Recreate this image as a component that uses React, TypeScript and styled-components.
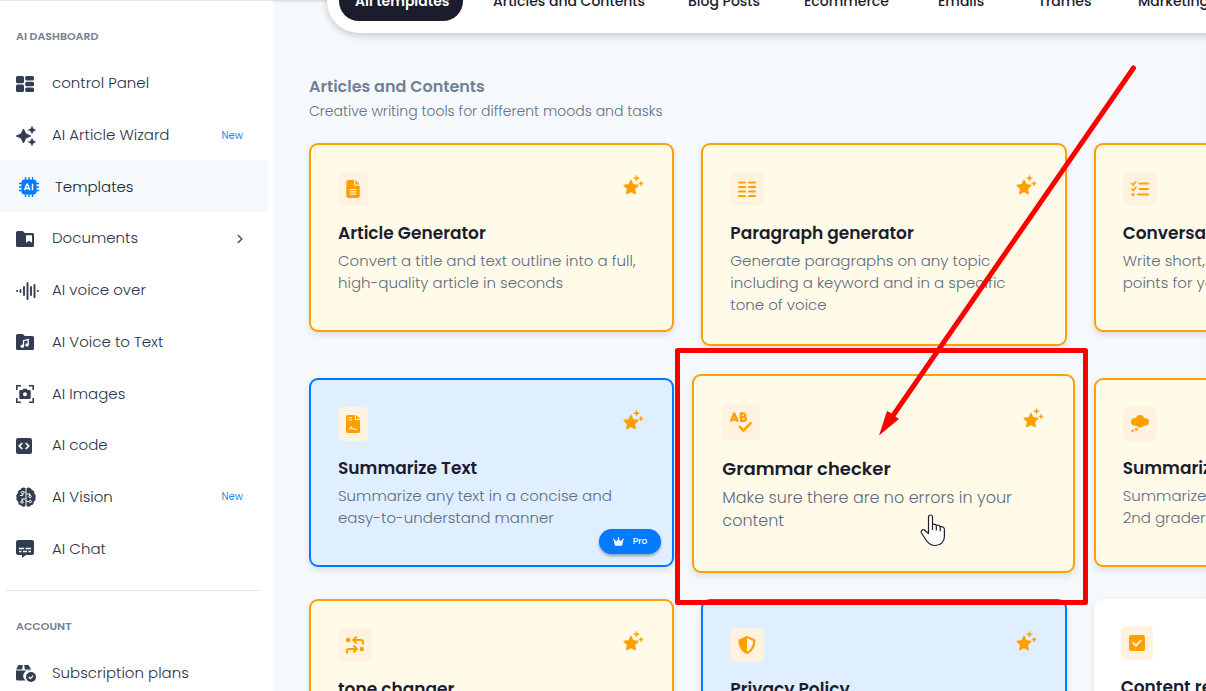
import React from "react";
import styled, { createGlobalStyle, css } from "styled-components";
import { FaShieldHalved, FaCrown, FaFileLines, FaSpellCheck } from "react-icons/fa6";

const ORANGE = "#ff9f00";
const BLUE = "#007aff";

const GlobalStyle = createGlobalStyle`
  * { box-sizing: border-box; }
  body {
    margin: 0;
    background: #f5f9fc;
    font-family: Poppins, Inter, "Open Sans", sans-serif;
    color: #1b1c2d;
  }
  h2, h3, p, ul { margin: 0; padding: 0; }
  ul { list-style: none; }
  button { font-family: inherit; border: 0; background: none; padding: 0; cursor: pointer; }
  a { color: inherit; text-decoration: none; }
  svg { display: block; flex: none; }
`;

const Page = styled.div`
  position: relative;
  display: flex;
  height: 100vh;
  overflow: hidden;
`;

const Sidebar = styled.nav`
  flex: none;
  width: 273px;
  background: #fff;
  border-top: 1px solid #e3e8ee;
  overflow: hidden;
`;

const GroupLabel = styled.h2`
  padding: 27px 16px 13px;
  font-size: 11px;
  line-height: 16px;
  font-weight: 600;
  color: #748094;
`;

const NavList = styled.ul<{ $height: number }>`
  display: grid;
  grid-auto-rows: 1fr;
  height: ${(p) => p.$height}px;
  margin-right: 5px;
`;

const NavLink = styled.a<{ $active?: boolean }>`
  display: flex;
  align-items: center;
  height: 100%;
  padding: 0 25px 0 16px;
  font-size: 15px;
  font-weight: 300;
  color: #2a3348;
  ${(p) =>
    p.$active &&
    css`
      padding-left: 19px;
      background: #f5f9fc;
      color: #1b1c2d;
    `}
`;

const NavIcon = styled.span`
  width: 36px;
  padding-top: 2px;
  color: #333d52;
`;

const NewTag = styled.span`
  margin-left: auto;
  padding-top: 2px;
  font-size: 10px;
  font-weight: 400;
  color: #2f8af0;
`;

const NavChevron = styled.span`
  margin-left: auto;
  padding-top: 2px;
`;

const Divider = styled.hr`
  height: 1px;
  margin: 16px 14px 0 6px;
  border: 0;
  background: #e3e8ee;
`;

const Main = styled.main`
  flex: 1;
  min-width: 0;
  padding: 0 36px;
  overflow: hidden;
  box-shadow: inset 0 3px 3px -2px #c9ced3;
`;

const TabsRow = styled.div`
  display: flex;
  align-items: flex-end;
  height: 33px;
  padding-left: 18px;
`;

const Tabs = styled.div`
  display: flex;
  flex: none;
  min-width: 100%;
  padding: 12px;
  border-radius: 32px;
  background: #fff;
  box-shadow: 0 3px 7px rgba(40, 50, 60, 0.22);
`;

const Tab = styled.button<{ $active?: boolean; $width: number }>`
  height: 40px;
  width: ${(p) => p.$width}px;
  padding: 0 16px;
  border-radius: 20px;
  text-align: left;
  white-space: nowrap;
  font-size: 14px;
  font-weight: 500;
  color: #1b1c2d;
  ${(p) =>
    p.$active &&
    css`
      margin-right: 14px;
      background: #1b1c2d;
      color: #fff;
      font-weight: 600;
    `}
`;

const SectionHead = styled.header`
  padding: 42px 0 19px;
  color: #718096;
`;

const SectionTitle = styled.h2`
  font-size: 16px;
  line-height: 24px;
  font-weight: 600;
`;

const SectionText = styled.p`
  font-size: 14px;
  line-height: 25px;
  font-weight: 300;
  color: #637087;
`;

const Grid = styled.div`
  display: grid;
  grid-template-columns: repeat(3, 1fr);
  gap: 32px 27px;
  align-items: start;
  min-width: 1150px;
`;

type Tone = "gold" | "pro" | "plain";

const tones = {
  gold: css`
    border: 2px solid ${ORANGE};
    background: #fffbe8;
  `,
  pro: css`
    border: 2px solid ${BLUE};
    background: #e0efff;
  `,
  plain: css`
    background: #fff;
  `,
};

const IconBox = styled.span`
  display: block;
  padding: 8px;
  border-radius: 5px;
  background: #fff3e0;
`;

const CardTitle = styled.h3`
  margin-top: 15px;
  font-size: 17px;
  line-height: 24px;
  font-weight: 600;
`;

const CardText = styled.p`
  margin-top: 5px;
  font-size: 15px;
  line-height: 22px;
  font-weight: 300;
  color: #5f6b82;
`;

const StarButton = styled.button`
  padding-top: 3px;
`;

const Card = styled.article<{ $tone: Tone; $raised?: boolean }>`
  position: relative;
  min-height: 189px;
  padding: 27px 27px 28px;
  border-radius: 9px;
  box-shadow: 0 3px 6px rgba(40, 50, 60, 0.13);
  ${(p) => tones[p.$tone]}
  ${(p) =>
    p.$raised &&
    css`
      min-height: 199px;
      margin: -4px -8px -6px -9px;
      padding: 28px;
      ${StarButton} {
        padding-top: 4px;
      }
      ${CardTitle} {
        font-size: 18px;
        margin-top: 17px;
      }
      ${CardText} {
        font-size: 16px;
        line-height: 23px;
      }
    `}
`;

const CardTop = styled.div`
  display: flex;
  justify-content: space-between;
  align-items: flex-start;
`;

const ProBadge = styled.span`
  position: absolute;
  right: 11px;
  bottom: 11px;
  display: flex;
  align-items: center;
  gap: 9px;
  height: 25px;
  padding: 0 14px;
  border-radius: 13px;
  background: ${BLUE};
  box-shadow: 0 2px 3px rgba(20, 40, 80, 0.4);
  color: #fff;
  font-size: 9px;
  font-weight: 500;
`;

const FileIcon = styled(FaFileLines)`
  width: 14px;
  height: 18px;
  color: ${ORANGE};
`;

const SpellIcon = styled(FaSpellCheck)`
  width: 22px;
  height: 20px;
  color: ${ORANGE};
`;

const Overlay = styled.svg`
  position: absolute;
  left: 675px;
  top: 60px;
  pointer-events: none;
`;

const StarIcon = () => (
  <svg width="22" height="20" viewBox="0 0 22 20" fill={ORANGE}>
    <path
      d="M8 5.300l2.100 4.400 4.900.7-3.500 3.400.8 4.900L8 16.400l-4.300 2.300.8-4.900L1 10.400l4.900-.7z"
      stroke={ORANGE}
      strokeWidth="1.200"
      strokeLinejoin="round"
    />
    <path
      d="M13.500 .3l.7 2.200 2.200.7-2.200.7-.7 2.200-.7-2.200-2.200-.7 2.200-.7zM18 6.300l.6 1.700 1.700.6-1.700.6-.6 1.700-.6-1.700-1.700-.6 1.700-.6z"
      stroke={ORANGE}
      strokeWidth=".6"
      strokeLinejoin="round"
    />
  </svg>
);

const svgProps = { fill: "currentColor" };

const icons = {
  panel: (
    <svg width="18" height="16" viewBox="0 0 18 16" {...svgProps}>
      <rect width="8" height="7.200" rx="1.500" />
      <rect y="8.500" width="8" height="7.500" rx="1.500" />
      <rect x="9.200" width="8.800" height="4.600" rx="1.500" />
      <rect x="9.200" y="5.700" width="8.800" height="4.600" rx="1.500" />
      <rect x="9.200" y="11.400" width="8.800" height="4.600" rx="1.500" />
    </svg>
  ),
  wizard: (
    <svg width="20" height="20" viewBox="0 0 20 20" {...svgProps}>
      <path d="M7.500 3l2.300 4.900L14.700 10l-4.900 2.100-2.300 4.900-2.300-4.900L.3 10l4.900-2.100z" stroke="currentColor" strokeWidth="1" strokeLinejoin="round" />
      <path d="M16 .3l1.200 2.500 2.500 1.200-2.500 1.200L16 7.700l-1.200-2.500L12.300 4l2.500-1.200zM16 12.300l1.200 2.500 2.500 1.200-2.500 1.200-1.200 2.500-1.200-2.500-2.500-1.200 2.500-1.200z" stroke="currentColor" strokeWidth=".5" strokeLinejoin="round" />
    </svg>
  ),
  chip: (
    <svg width="20" height="20" viewBox="0 0 20 20" fill={BLUE}>
      <path d="M6.500 0v20M10 0v20M13.500 0v20M0 6.500h20M0 10h20M0 13.500h20" stroke={BLUE} strokeWidth="1.300" />
      <rect x="2.500" y="2.500" width="15" height="15" rx="3" />
      <path d="M5.500 13.200l2.300-6h.8l2.300 6M6.300 11.500h3.800M13.500 6.800v6.500" fill="none" stroke="#fff" strokeWidth="1.500" />
    </svg>
  ),
  documents: (
    <svg width="18" height="16" viewBox="0 0 18 16" {...svgProps}>
      <path fillRule="evenodd" d="M1.500 0h5.300l2 2h7.700A1.500 1.500 0 0 1 18 3.500v11a1.500 1.500 0 0 1-1.500 1.500h-15A1.500 1.500 0 0 1 0 14.500v-13A1.500 1.500 0 0 1 1.500 0zM10 4.300v7.500l3-2 3 2V4.300z" />
    </svg>
  ),
  wave: (
    <svg width="23" height="18" viewBox="0 0 23 18" fill="none" stroke="currentColor" strokeWidth="1.900" strokeLinecap="round">
      <path d="M1 9h.2M4.500 8v2M8 5v8M11.500 1v16M15 5v8M18.500 3v12M22 9h-.2" />
    </svg>
  ),
  music: (
    <svg width="18" height="16" viewBox="0 0 18 16" {...svgProps}>
      <path d="M1.500 0h5.300l2 2h7.700A1.500 1.500 0 0 1 18 3.500v11a1.500 1.500 0 0 1-1.500 1.500h-15A1.500 1.500 0 0 1 0 14.500v-13A1.500 1.500 0 0 1 1.500 0z" />
      <path d="M7.500 12V6.700l4.700-1.200v5.300" fill="none" stroke="#fff" strokeWidth="1.300" />
      <circle cx="6.300" cy="12.200" r="1.700" fill="#fff" />
      <circle cx="11" cy="11" r="1.700" fill="#fff" />
    </svg>
  ),
  images: (
    <svg width="18" height="18" viewBox="0 0 18 18" {...svgProps}>
      <path d="M.8 5V.8H5M13 .8h4.200V5M17.200 13v4.200H13M5 17.200H.8V13" fill="none" stroke="currentColor" strokeWidth="1.600" />
      <path fillRule="evenodd" d="M4.500 5h2l.9-1.300h3.200l.9 1.300h2A1.200 1.200 0 0 1 14.700 6.200v6.600a1.200 1.200 0 0 1-1.200 1.200h-9a1.200 1.200 0 0 1-1.200-1.200V6.200A1.200 1.200 0 0 1 4.500 5zM9 7.200a2 2 0 1 0 0 4 2 2 0 0 0 0-4z" />
    </svg>
  ),
  code: (
    <svg width="16" height="16" viewBox="0 0 16 16" {...svgProps}>
      <rect width="16" height="16" rx="2" />
      <path d="M6.300 5L3.300 8l3 3M9.700 5l3 3-3 3" fill="none" stroke="#fff" strokeWidth="1.700" />
    </svg>
  ),
  brain: (
    <svg width="20" height="20" viewBox="0 0 20 20" {...svgProps}>
      <path d="M9.500 1.200v17.600C8.500 20 6 20.200 5.200 18.300 3 18.300 2 16.500 2.400 14.800.6 14 0 12.300.7 10.800-.2 9.200.2 7.500 1.700 6.700 1.300 4.700 2.500 3.200 4.200 3 4.800.5 8 -.4 9.500 1.200z" />
      <path d="M10.500 1.200v17.600c1 1.200 3.500 1.400 4.300-.5 2.200 0 3.200-1.800 2.800-3.500 1.800-.8 2.400-2.500 1.700-4 .9-1.600.5-3.300-1-4.100.4-2-.8-3.500-2.500-3.700C15.200.5 12-.4 10.500 1.200z" />
      <path d="M9.500 5.200H7.700M9.500 12H6.300v2M4 8.500h1.500a1.500 1.500 0 0 0 1.500-1.500M10.500 7h3.200v1.500M10.500 14.500h2.500" fill="none" stroke="#fff" strokeWidth="1.100" />
      <g fill="#333d52" stroke="#fff" strokeWidth="1">
        <circle cx="6.500" cy="5.500" r="1.200" />
        <circle cx="6" cy="15" r="1.200" />
        <circle cx="14" cy="9.500" r="1.200" />
        <circle cx="14.200" cy="14.500" r="1.200" />
      </g>
    </svg>
  ),
  chat: (
    <svg width="18" height="18" viewBox="0 0 18 18" {...svgProps}>
      <path d="M2 0h14a2 2 0 0 1 2 2v11a2 2 0 0 1-2 2h-6l-4 3v-3H2a2 2 0 0 1-2-2V2a2 2 0 0 1 2-2z" />
      <path d="M3 8.500h5M9.500 8.500H15M3 11.500h2.500M7 11.500h4M12.500 11.500H15" stroke="#fff" strokeWidth="1.400" />
    </svg>
  ),
  plans: (
    <svg width="21" height="17" viewBox="0 0 21 17" {...svgProps}>
      <path d="M2.500 0h4.300l-.6 4.500H0zM8.200 0h4.300L15 4.500H8.800zM0 5.600h15.200a5.700 5.700 0 0 0-5.500 9.900H1.500A1.500 1.500 0 0 1 0 14z" />
      <circle cx="15" cy="12" r="5" />
      <path d="M12.800 12l1.600 1.600 2.800-3" fill="none" stroke="#fff" strokeWidth="1.300" />
    </svg>
  ),
  chevron: (
    <svg width="7" height="10" viewBox="0 0 7 10" fill="none" stroke="#4a5264" strokeWidth="1.500">
      <path d="M1.800 1l4 4-4 4" />
    </svg>
  ),
};

const cardIcons = {
  file: <FileIcon />,
  columns: (
    <svg width="18" height="18" viewBox="0 0 18 18" stroke={ORANGE} strokeWidth="2" strokeLinecap="round">
      <path d="M1 2.500h6M11 2.500h6M1 7h6M11 7h6M1 11.500h6M11 11.500h6M1 16h6M11 16h6" />
    </svg>
  ),
  checklist: (
    <svg width="18" height="18" viewBox="0 0 18 18" fill="none" stroke={ORANGE} strokeLinecap="round" strokeLinejoin="round">
      <path d="M8.500 3.500H17M8.500 9H17M7 14.500h10" strokeWidth="2" />
      <path d="M.8 3.500l1.400 1.400L5 1.800M.8 9l1.400 1.400L5 7.300" strokeWidth="1.600" />
      <circle cx="2" cy="14.500" r="1.500" fill={ORANGE} stroke="none" />
    </svg>
  ),
  contract: (
    <svg width="14" height="18" viewBox="0 0 14 18" fill={ORANGE}>
      <path d="M1.800 0H9v5h5v11.200a1.800 1.800 0 0 1-1.800 1.800H1.800A1.800 1.800 0 0 1 0 16.200V1.800A1.800 1.800 0 0 1 1.800 0zM10 0l4 4h-4z" />
      <path d="M2.500 2.800h3.500M2.500 5h3.500M3 14.500c1.300 0 1.200-2.500 2-2.500s.5 2 1.300 2 .8-.8 1.300-.8.500 1.300 1.200 1.300H11" fill="none" stroke="#fff3e0" strokeWidth="1.100" />
    </svg>
  ),
  spell: <SpellIcon />,
  thought: (
    <svg width="18" height="18" viewBox="0 0 18 18" fill={ORANGE}>
      <circle cx="9" cy="4" r="4" />
      <ellipse cx="4.200" cy="6.800" rx="4.200" ry="3.900" />
      <ellipse cx="13.800" cy="6.800" rx="4.200" ry="3.900" />
      <circle cx="9" cy="8.500" r="4" />
      <circle cx="5.300" cy="14.200" r="1.500" />
      <circle cx="1.500" cy="15.800" r="1.200" />
    </svg>
  ),
  tone: (
    <svg width="18" height="18" viewBox="0 0 18 18" fill="none" stroke={ORANGE} strokeWidth="2.200" strokeLinecap="round" strokeLinejoin="round">
      <path d="M17 7.500V6a2 2 0 0 0-2-2H8M10 1.300L7.200 4 10 6.700M1 16.500V15a2 2 0 0 1 2-2h7M8 10.300l2.800 2.700L8 15.700" />
      <circle cx="2.200" cy="4" r="2.200" fill={ORANGE} stroke="none" />
      <circle cx="15.800" cy="13" r="2.200" fill={ORANGE} stroke="none" />
    </svg>
  ),
  shield: <FaShieldHalved size={18} color={ORANGE} />,
  check: (
    <svg width="16" height="18" viewBox="0 0 16 18" fill={ORANGE}>
      <rect y="1" width="16" height="16" rx="2" />
      <path d="M4.300 9l2.700 2.700 4.800-5" fill="none" stroke="#fff3e0" strokeWidth="1.800" strokeLinecap="round" />
    </svg>
  ),
};

type NavEntry = { icon: React.ReactNode; label: string; isNew?: boolean; active?: boolean; sub?: boolean };

const dashboardNav: NavEntry[] = [
  { icon: icons.panel, label: "control Panel" },
  { icon: icons.wizard, label: "AI Article Wizard", isNew: true },
  { icon: icons.chip, label: "Templates", active: true },
  { icon: icons.documents, label: "Documents", sub: true },
  { icon: icons.wave, label: "AI voice over" },
  { icon: icons.music, label: "AI Voice to Text" },
  { icon: icons.images, label: "AI Images" },
  { icon: icons.code, label: "AI code" },
  { icon: icons.brain, label: "AI Vision", isNew: true },
  { icon: icons.chat, label: "AI Chat" },
];

const accountNav: NavEntry[] = [{ icon: icons.plans, label: "Subscription plans" }];

const tabs = [
  { label: "All templates", width: 124 },
  { label: "Articles and Contents", width: 195 },
  { label: "Blog Posts", width: 116 },
  { label: "Ecommerce", width: 134 },
  { label: "Emails", width: 100 },
  { label: "Trames", width: 100 },
  { label: "Marketing", width: 120 },
];

type CardEntry = { icon: React.ReactNode; title: string; text: string; tone: Tone; raised?: boolean; pro?: boolean };

const cards: CardEntry[] = [
  { icon: cardIcons.file, title: "Article Generator", text: "Convert a title and text outline into a full, high-quality article in seconds", tone: "gold" },
  { icon: cardIcons.columns, title: "Paragraph generator", text: "Generate paragraphs on any topic including a keyword and in a specific tone of voice", tone: "gold" },
  { icon: cardIcons.checklist, title: "Conversation points", text: "Write short, simple and informative points for your article", tone: "gold" },
  { icon: cardIcons.contract, title: "Summarize Text", text: "Summarize any text in a concise and easy-to-understand manner", tone: "pro", pro: true },
  { icon: cardIcons.spell, title: "Grammar checker", text: "Make sure there are no errors in your content", tone: "gold", raised: true },
  { icon: cardIcons.thought, title: "Summarize for 2nd grader", text: "Summarize any complex text for a 2nd\u00a0grader", tone: "gold" },
  { icon: cardIcons.tone, title: "tone changer", text: "Change the tone of your writing", tone: "gold" },
  { icon: cardIcons.shield, title: "Privacy Policy", text: "Write a privacy policy", tone: "pro" },
  { icon: cardIcons.check, title: "Content rewriter", text: "Rewrite a piece of content", tone: "plain" },
];

const Nav = ({ items, height }: { items: NavEntry[]; height: number }) => (
  <NavList $height={height}>
    {items.map((item) => (
      <li key={item.label}>
        <NavLink href="#" $active={item.active}>
          <NavIcon>{item.icon}</NavIcon>
          {item.label}
          {item.isNew && <NewTag>New</NewTag>}
          {item.sub && <NavChevron>{icons.chevron}</NavChevron>}
        </NavLink>
      </li>
    ))}
  </NavList>
);

export default function App() {
  return (
    <Page>
      <GlobalStyle />
      <Sidebar>
        <GroupLabel>AI DASHBOARD</GroupLabel>
        <Nav items={dashboardNav} height={517} />
        <Divider />
        <GroupLabel>ACCOUNT</GroupLabel>
        <Nav items={accountNav} height={51} />
      </Sidebar>
      <Main>
        <TabsRow>
          <Tabs>
            {tabs.map((tab, i) => (
              <Tab key={tab.label} $active={i === 0} $width={tab.width}>
                {tab.label}
              </Tab>
            ))}
          </Tabs>
        </TabsRow>
        <SectionHead>
          <SectionTitle>Articles and Contents</SectionTitle>
          <SectionText>Creative writing tools for different moods and tasks</SectionText>
        </SectionHead>
        <Grid>
          {cards.map((card) => (
            <Card key={card.title} $tone={card.tone} $raised={card.raised}>
              <CardTop>
                <IconBox>{card.icon}</IconBox>
                <StarButton aria-label={`Add ${card.title} to favorites`}>
                  <StarIcon />
                </StarButton>
              </CardTop>
              <CardTitle>{card.title}</CardTitle>
              <CardText>{card.text}</CardText>
              {card.pro && (
                <ProBadge>
                  <FaCrown size={11} />
                  Pro
                </ProBadge>
              )}
            </Card>
          ))}
        </Grid>
      </Main>
      <Overlay width="470" height="550" viewBox="675 60 470 550">
        <rect x="677.500" y="350.500" width="408" height="252" fill="none" stroke="#f00" strokeWidth="5" strokeLinejoin="round" />
        <path d="M1133.500 68L892 417" stroke="#f00" strokeWidth="5" strokeLinecap="round" />
        <path d="M879 435.500l8-24.500 3 1.500 9 6.500z" fill="#f00" />
        <path
          d="M928.500 533.500v-16.500a2 2 0 0 1 4 0v7.500c1.500-.6 3.300-.2 3.800 1 1.600-.6 3.300 0 3.800 1.200 2-.5 4.300.3 4.300 2.800v7c0 5-3.400 9-9 9-4.500 0-7-2-9-5l-5-7.500c-1-2 1-4 3-3z"
          fill="#fff"
          stroke="#1b1c2d"
          strokeWidth="1.200"
          strokeLinejoin="round"
        />
        <path d="M932.500 524.500v5.500M936.300 525.500v5M940.200 526.700v4.500" stroke="#1b1c2d" strokeWidth="1.200" />
      </Overlay>
    </Page>
  );
}
